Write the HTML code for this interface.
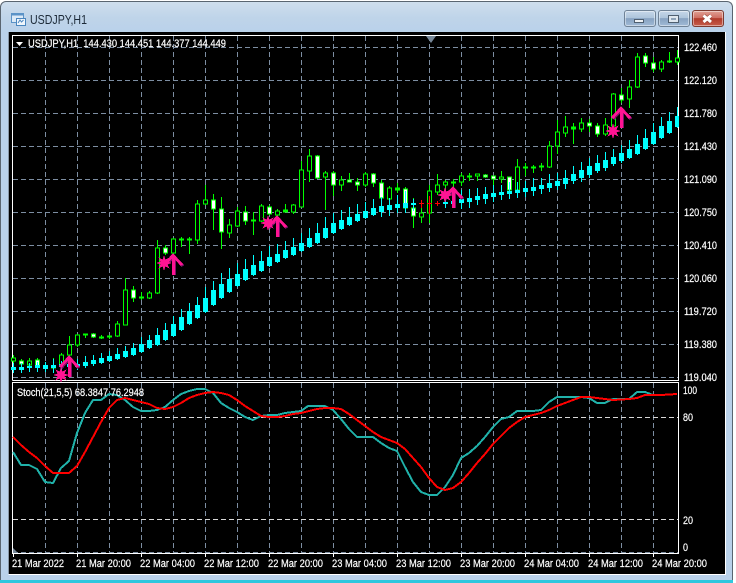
<!DOCTYPE html>
<html><head><meta charset="utf-8"><style>
html,body{margin:0;padding:0;background:#fff}
body{width:736px;height:583px;overflow:hidden;position:relative}
#win{position:absolute;left:0;top:1px;width:733px;height:579px;border-radius:6px 6px 0 0;box-sizing:border-box;border:1px solid #5a6570;border-bottom:0;background:linear-gradient(180deg,#cfdeed 0,#bfd4e9 16px,#b9d1ea 32px)}
#bot{position:absolute;left:0;top:580px;width:733px;height:3px;background:#2fc7de}
.b{position:absolute;top:10px;height:17px;box-sizing:border-box;border:1px solid #6f8296;border-radius:3px;background:linear-gradient(180deg,#c6d7e9 0,#aec5dc 45%,#87a2c1 50%,#a0bad6 100%);box-shadow:inset 0 0 0 1px rgba(255,255,255,.45)}
svg{position:absolute;left:0;top:0}
text{font-family:"Liberation Sans",sans-serif;font-size:11px;fill:#fff;stroke:#fff;stroke-width:.2}
text.t{font-size:12.500px;fill:#1c2a38;stroke:none}
</style></head><body>
<div id="win"></div><div id="bot"></div>
<div class="b" style="left:624px;width:32px"></div>
<div class="b" style="left:658px;width:32px"></div>
<div class="b" style="left:692px;width:32px;border-color:#7c3a30;background:linear-gradient(180deg,#e0a094 0,#cf6f63 45%,#b03a2a 50%,#c75c4b 100%)"></div>
<svg width="736" height="583" viewBox="0 0 736 583">
<!-- title -->
<text class="t" x="30" y="24" textLength="57" lengthAdjust="spacingAndGlyphs">USDJPY,H1</text>
<path d="M11.500 13.500h12v9h-12z" fill="#dceaf7" stroke="#5b93c7"/><path d="M11.500 13.500h12v2h-12z" fill="#5b93c7"/>
<path d="M16.500 18.500h9v7h-9z" fill="#f0f6fc" stroke="#4a86bf"/><path d="M18 23l2-3 1.500 2 2-2" fill="none" stroke="#4a86bf"/>
<!-- button glyphs -->
<path d="M634.500 19.500h9v3h-9z" fill="#eef2f6" stroke="#4f5f70"/>
<path d="M668.500 15.500h10v7h-10z" fill="#dfe7ef" stroke="#4f5f70"/><path d="M671 18h5v2h-5z" fill="#8fa3b8"/>
<path d="M703.500 15.500L711 22M711 15.500L703.500 22" fill="none" stroke="#8a3a2e" stroke-width="4"/>
<path d="M703.500 15.500L711 22M711 15.500L703.500 22" fill="none" stroke="#fff" stroke-width="3"/>
<!-- black client -->
<rect x="9" y="32" width="716" height="542" fill="#000"/>
<path d="M8.500 32V574" fill="none" stroke="#8796a6"/>
<path d="M8.500 574.500H725.500V32" fill="none" stroke="#fff"/>
<!-- frame -->
<path d="M12.500 380.500V35.500H678.500V380.500H12.500M12.500 382.500H678.500V553.500H12.500z" fill="none" stroke="#fff"/>
<!-- grid -->
<g stroke="#7d8ea2" stroke-dasharray="5 3" shape-rendering="crispEdges" fill="none">
<path d="M13 47.500H678M13 80.500H678M13 113.500H678M13 146.500H678M13 179.500H678M13 212.500H678M13 245.500H678M13 278.500H678M13 311.500H678M13 344.500H678M13 377.500H678"/>
<path d="M45.500 36V380M77.500 36V380M109.500 36V380M141.500 36V380M173.500 36V380M205.500 36V380M237.500 36V380M269.500 36V380M301.500 36V380M333.500 36V380M365.500 36V380M397.500 36V380M429.500 36V380M461.500 36V380M493.500 36V380M525.500 36V380M557.500 36V380M589.500 36V380M621.500 36V380M653.500 36V380"/>
<path d="M45.500 383V553M77.500 383V553M109.500 383V553M141.500 383V553M173.500 383V553M205.500 383V553M237.500 383V553M269.500 383V553M301.500 383V553M333.500 383V553M365.500 383V553M397.500 383V553M429.500 383V553M461.500 383V553M493.500 383V553M525.500 383V553M557.500 383V553M589.500 383V553M621.500 383V553M653.500 383V553"/>
<path d="M13 552.500H678"/>
</g>
<path d="M13 417.500H678M13 519.500H678" stroke="#d8d8d8" stroke-dasharray="5 3" shape-rendering="crispEdges"/>
<path d="M13 548l5 5h-5z" fill="#778899"/>
<path d="M426 36h10l-5 7z" fill="#778899"/>
<!-- green wicks -->
<path shape-rendering="crispEdges" fill="none" stroke="#00ff00" d="M13.500 355V364M21.500 359V366M29.500 358V368M37.500 358V372M45.500 362V372M53.500 358V372M61.500 353V370M69.500 336V358M77.500 334V347M85.500 334V338M93.500 333V338M101.500 335V339M109.500 335V339M117.500 321V337M125.500 278V325M133.500 286V302M141.500 292V300M149.500 291V299M157.500 240V294M165.500 245V255M173.500 238V254M181.500 237V247M189.500 237V254M197.500 200V244M205.500 185V205M213.500 194V230M221.500 197V249M229.500 219V238M237.500 207V227M245.500 206V225M253.500 212V235M261.500 204V222M269.500 205V215M277.500 209V216M285.500 204V212M293.500 204V214M301.500 161V207M309.500 149V182M317.500 155V179M325.500 171V210M333.500 171V196M341.500 176V191M349.500 173V182M357.500 178V191M365.500 172V187M373.500 173V187M381.500 180V205M389.500 186V205M397.500 183V193M405.500 187V213M413.500 198V228M421.500 208V223M429.500 185V223M437.500 174V195M445.500 180V190M453.500 179V188M461.500 173V186M469.500 173V181M477.500 174V181M485.500 174V178M493.500 176V193M501.500 171V183M509.500 177V195M517.500 159V192M525.500 163V176M533.500 165V173M541.500 163V171M549.500 141V168M557.500 120V154M565.500 116V137M573.500 123V144M581.500 118V132M589.500 119V132M597.500 123V137M605.500 118V136M613.500 93V126M621.500 88V103M629.500 80V108M637.500 53V88M645.500 53V67M653.500 57V72M661.500 60V72M669.500 52V63M677.500 50V65"/>
<!-- hollow -->
<path shape-rendering="crispEdges" fill="#000" stroke="#00ff00" d="M11.500 358h4v3h-4zM27.500 361h4v4h-4zM51.500 366h4v2h-4zM59.500 355h4v11h-4zM67.500 345h4v10h-4zM75.500 335h4v10h-4zM115.500 324h4v12h-4zM123.500 290h4v35h-4zM147.500 293h4v5h-4zM155.500 248h4v45h-4zM171.500 239h4v14h-4zM195.500 204h4v36h-4zM203.500 200h4v4h-4zM227.500 225h4v8h-4zM235.500 211h4v15h-4zM259.500 206h4v15h-4zM275.500 211h4v4h-4zM291.500 205h4v7h-4zM299.500 170h4v37h-4zM307.500 156h4v15h-4zM323.500 173h4v4h-4zM339.500 180h4v5h-4zM363.500 174h4v11h-4zM387.500 188h4v11h-4zM419.500 213h4v4h-4zM427.500 191h4v22h-4zM435.500 185h4v7h-4zM443.500 182h4v3h-4zM459.500 176h4v6h-4zM475.500 174h4v2h-4zM499.500 177h4v2h-4zM515.500 167h4v23h-4zM547.500 146h4v21h-4zM555.500 132h4v14h-4zM563.500 127h4v6h-4zM579.500 123h4v6h-4zM603.500 125h4v9h-4zM611.500 94h4v32h-4zM627.500 87h4v12h-4zM635.500 57h4v30h-4zM659.500 62h4v7h-4zM675.500 58h4v4h-4z"/>
<!-- white -->
<path shape-rendering="crispEdges" fill="#fff" stroke="#00ff00" d="M19.500 361h4v3h-4zM35.500 360h4v6h-4zM91.500 334h4v3h-4zM131.500 290h4v8h-4zM163.500 248h4v5h-4zM211.500 200h4v9h-4zM219.500 209h4v23h-4zM243.500 212h4v9h-4zM267.500 207h4v7h-4zM315.500 156h4v22h-4zM331.500 173h4v12h-4zM347.500 180h4v2h-4zM355.500 182h4v3h-4zM371.500 174h4v9h-4zM379.500 183h4v15h-4zM403.500 189h4v19h-4zM411.500 208h4v8h-4zM483.500 175h4v2h-4zM491.500 176h4v3h-4zM507.500 177h4v13h-4zM587.500 123h4v3h-4zM595.500 126h4v8h-4zM619.500 95h4v5h-4zM643.500 56h4v7h-4zM651.500 63h4v6h-4z"/>
<!-- doji -->
<path shape-rendering="crispEdges" fill="#00ff00" stroke="#00ff00" d="M43.500 366h4v1h-4zM83.500 334h4v1h-4zM99.500 337h4v1h-4zM107.500 336h4v1h-4zM139.500 297h4v1h-4zM179.500 239h4v1h-4zM187.500 239h4v1h-4zM251.500 220h4v1h-4zM283.500 210h4v2h-4zM395.500 188h4v2h-4zM451.500 182h4v1h-4zM467.500 176h4v1h-4zM523.500 167h4v1h-4zM531.500 167h4v1h-4zM539.500 166h4v1h-4zM571.500 127h4v2h-4zM667.500 61h4v1h-4z"/>
<!-- cyan wicks -->
<path shape-rendering="crispEdges" fill="none" stroke="#00ffff" d="M13.500 363V373M21.500 363V373M29.500 363V372M37.500 362V372M45.500 362V372M53.500 359V373M61.500 361V370M69.500 360V370M77.500 359V370M85.500 356V368M93.500 355V366M101.500 353V364M109.500 351V362M117.500 348V360M125.500 346V358M133.500 343V356M141.500 337V353M149.500 335V349M157.500 328V346M165.500 323V341M173.500 316V337M181.500 309V331M189.500 303V325M197.500 297V319M205.500 287V313M213.500 281V306M221.500 273V299M229.500 268V293M237.500 263V287M245.500 259V281M253.500 255V276M261.500 251V272M269.500 246V267M277.500 244V263M285.500 241V259M293.500 238V256M301.500 233V252M309.500 228V248M317.500 223V244M325.500 217V239M333.500 213V234M341.500 210V230M349.500 207V226M357.500 204V222M365.500 202V219M373.500 199V216M381.500 197V217M389.500 198V216M397.500 195V213M405.500 191V213M413.500 199V211M445.500 197V208M453.500 195V208M461.500 190V209M469.500 189V208M477.500 188V205M485.500 187V204M493.500 185V202M501.500 185V200M509.500 182V199M517.500 182V198M525.500 181V197M533.500 178V196M541.500 178V194M549.500 174V192M557.500 173V190M565.500 170V189M573.500 166V184M581.500 162V182M589.500 158V178M597.500 155V173M605.500 152V171M613.500 149V166M621.500 145V163M629.500 140V159M637.500 135V155M645.500 129V150M653.500 123V145M661.500 117V139M669.500 112V134M677.500 107V128"/>
<!-- cyan bodies -->
<path shape-rendering="crispEdges" fill="#00ffff" d="M11 367h5v3h-5zM19 367h5v3h-5zM27 366h5v2h-5zM35 365h5v3h-5zM43 365h5v4h-5zM51 365h5v3h-5zM59 364h5v3h-5zM67 364h5v3h-5zM75 364h5v3h-5zM83 362h5v4h-5zM91 360h5v4h-5zM99 358h5v5h-5zM107 356h5v5h-5zM115 354h5v5h-5zM123 351h5v6h-5zM131 348h5v7h-5zM139 344h5v8h-5zM147 340h5v8h-5zM155 335h5v10h-5zM163 330h5v10h-5zM171 324h5v12h-5zM179 317h5v13h-5zM187 311h5v13h-5zM195 305h5v13h-5zM203 298h5v14h-5zM211 290h5v15h-5zM219 284h5v14h-5zM227 279h5v13h-5zM235 274h5v12h-5zM243 269h5v11h-5zM251 265h5v10h-5zM259 261h5v10h-5zM267 257h5v9h-5zM275 254h5v8h-5zM283 250h5v8h-5zM291 247h5v8h-5zM299 243h5v8h-5zM307 238h5v9h-5zM315 233h5v10h-5zM323 228h5v10h-5zM331 223h5v10h-5zM339 220h5v9h-5zM347 217h5v8h-5zM355 214h5v7h-5zM363 211h5v7h-5zM371 208h5v7h-5zM379 206h5v6h-5zM387 205h5v5h-5zM395 204h5v4h-5zM403 203h5v5h-5zM411 203h5v2h-5zM443 202h5v2h-5zM451 201h5v3h-5zM459 199h5v4h-5zM467 198h5v4h-5zM475 196h5v4h-5zM483 194h5v5h-5zM491 193h5v4h-5zM499 192h5v3h-5zM507 191h5v3h-5zM515 190h5v3h-5zM523 188h5v4h-5zM531 187h5v4h-5zM539 185h5v4h-5zM547 183h5v5h-5zM555 181h5v5h-5zM563 178h5v6h-5zM571 174h5v7h-5zM579 170h5v8h-5zM587 166h5v9h-5zM595 163h5v8h-5zM603 160h5v8h-5zM611 157h5v7h-5zM619 153h5v8h-5zM627 149h5v9h-5zM635 144h5v10h-5zM643 138h5v11h-5zM651 132h5v12h-5zM659 126h5v12h-5zM667 121h5v12h-5zM675 116h4v11h-4z"/>
<path shape-rendering="crispEdges" fill="none" stroke="#ff0000" d="M419 203.500h5M421.500 200V208M427 203.500h5M429.500 196V214M435 203.500h5M437.500 201V206"/>
<!-- stochastic -->
<polyline shape-rendering="crispEdges" fill="none" stroke="#20b2aa" stroke-width="2" points="13,452 21,465 29,465 37,469 45,482 53,483 61,468 69,461 77,433 85,413 93,400 101,400 109,394 117,395 125,400 133,407 141,411 149,411 157,410 165,407 173,400 181,394 189,391 197,389 205,389 213,393 221,403 229,408 237,412 245,417 253,420 261,416 269,415 277,415 285,413 293,412 301,411 308,406 317,406 325,406 333,410 341,419 349,429 357,437 365,437 373,437 381,443 389,448 397,451 405,467 413,482 421,492 429,495 437,495 445,487 453,475 461,458 469,453 477,446 485,437 493,427 501,419 509,417 517,411 525,411 533,411 541,410 549,402 557,397 565,397 573,397 581,397 589,398 597,403 605,403 613,399 629,399 637,392 645,392 653,395 661,395 677,394"/>
<polyline shape-rendering="crispEdges" fill="none" stroke="#ff0000" stroke-width="2" points="13,437 21,445 29,452 37,458 45,466 53,473 61,473 69,473 77,466 85,452 93,437 101,422 109,408 117,400 125,398 133,400 141,402 149,404 157,408 165,409 173,407 181,403 189,398 197,395 205,393 213,392 221,393 229,395 237,400 245,406 253,411 261,416 269,417 277,417 285,416 293,414 301,413 309,411 317,409 325,408 333,408 341,409 349,414 357,420 365,426 373,432 381,437 389,440 397,443 405,449 413,458 421,467 429,478 437,487 445,490 453,488 461,482 469,473 477,463 485,454 493,444 501,436 509,428 517,422 525,417 533,415 541,413 549,410 557,406 565,403 573,400 581,397 589,397 597,398 605,399 613,400 629,399 637,398 645,395 661,395 677,394"/>
<!-- arrows -->
<defs>
<g id="ar" shape-rendering="crispEdges"><path d="M-9 12L0 2.500 9 12" transform="translate(1 1)" fill="none" stroke="#80106a" stroke-width="3"/><path d="M2 5h1v17H2z" fill="#800f6a"/><path d="M-9 12L0 2.500 9 12" fill="none" stroke="#ff1493" stroke-width="3"/><path d="M-1 3h3v19h-3z" fill="#ff1493"/></g>
<path id="st" shape-rendering="crispEdges" fill="#ff1493" d="M7.500 0L3.500 1.400 5.300 5.300 1.400 3.500 0 7.500-1.400 3.500-5.300 5.300-3.500 1.400-7.500 0-3.500-1.400-5.300-5.300-1.400-3.500 0-7.500 1.400-3.500 5.300-5.300 3.500-1.400z"/>
</defs>
<use href="#ar" x="69" y="355"/><use href="#st" x="61" y="375"/>
<use href="#ar" x="173" y="253"/><use href="#st" x="164" y="263"/>
<use href="#ar" x="277" y="215"/><use href="#st" x="268" y="223"/>
<use href="#ar" x="453" y="186"/><use href="#st" x="445" y="195"/>
<use href="#ar" x="621" y="106"/><use href="#st" x="613" y="131"/>
<!-- legend -->
<path d="M16 42h7l-3.500 4z" fill="#fff"/>
<text x="28" y="47" textLength="198" lengthAdjust="spacingAndGlyphs" xml:space="preserve">USDJPY,H1  144.430 144.451 144.377 144.449</text>
<text x="17" y="396" textLength="127" lengthAdjust="spacingAndGlyphs">Stoch(21,5,5) 68.3847 76.2948</text>
<!-- price axis -->
<g>
<text x="684" y="51" textLength="33" lengthAdjust="spacingAndGlyphs">122.460</text>
<text x="684" y="84" textLength="33" lengthAdjust="spacingAndGlyphs">122.120</text>
<text x="684" y="117" textLength="33" lengthAdjust="spacingAndGlyphs">121.780</text>
<text x="684" y="150" textLength="33" lengthAdjust="spacingAndGlyphs">121.430</text>
<text x="684" y="183" textLength="33" lengthAdjust="spacingAndGlyphs">121.090</text>
<text x="684" y="216" textLength="33" lengthAdjust="spacingAndGlyphs">120.750</text>
<text x="684" y="249" textLength="33" lengthAdjust="spacingAndGlyphs">120.410</text>
<text x="684" y="282" textLength="33" lengthAdjust="spacingAndGlyphs">120.060</text>
<text x="684" y="315" textLength="33" lengthAdjust="spacingAndGlyphs">119.720</text>
<text x="684" y="348" textLength="33" lengthAdjust="spacingAndGlyphs">119.380</text>
<text x="684" y="381" textLength="33" lengthAdjust="spacingAndGlyphs">119.040</text>
<text x="683" y="394" textLength="14" lengthAdjust="spacingAndGlyphs">100</text>
<text x="683" y="421" textLength="10" lengthAdjust="spacingAndGlyphs">80</text>
<text x="683" y="524" textLength="10" lengthAdjust="spacingAndGlyphs">20</text>
<text x="683" y="551" textLength="5" lengthAdjust="spacingAndGlyphs">0</text>
</g>
<!-- time axis -->
<path d="M13.500 553V557M77.500 553V557M141.500 553V557M205.500 553V557M269.500 553V557M333.500 553V557M397.500 553V557M461.500 553V557M525.500 553V557M589.500 553V557M653.500 553V557" stroke="#fff"/>
<g>
<text x="12" y="567" textLength="52" lengthAdjust="spacingAndGlyphs">21 Mar 2022</text>
<text x="76" y="567" textLength="55" lengthAdjust="spacingAndGlyphs">21 Mar 20:00</text>
<text x="140" y="567" textLength="55" lengthAdjust="spacingAndGlyphs">22 Mar 04:00</text>
<text x="204" y="567" textLength="55" lengthAdjust="spacingAndGlyphs">22 Mar 12:00</text>
<text x="268" y="567" textLength="55" lengthAdjust="spacingAndGlyphs">22 Mar 20:00</text>
<text x="332" y="567" textLength="55" lengthAdjust="spacingAndGlyphs">23 Mar 04:00</text>
<text x="396" y="567" textLength="55" lengthAdjust="spacingAndGlyphs">23 Mar 12:00</text>
<text x="460" y="567" textLength="55" lengthAdjust="spacingAndGlyphs">23 Mar 20:00</text>
<text x="524" y="567" textLength="55" lengthAdjust="spacingAndGlyphs">24 Mar 04:00</text>
<text x="588" y="567" textLength="55" lengthAdjust="spacingAndGlyphs">24 Mar 12:00</text>
<text x="652" y="567" textLength="55" lengthAdjust="spacingAndGlyphs">24 Mar 20:00</text>
</g>
</svg>
</body></html>
